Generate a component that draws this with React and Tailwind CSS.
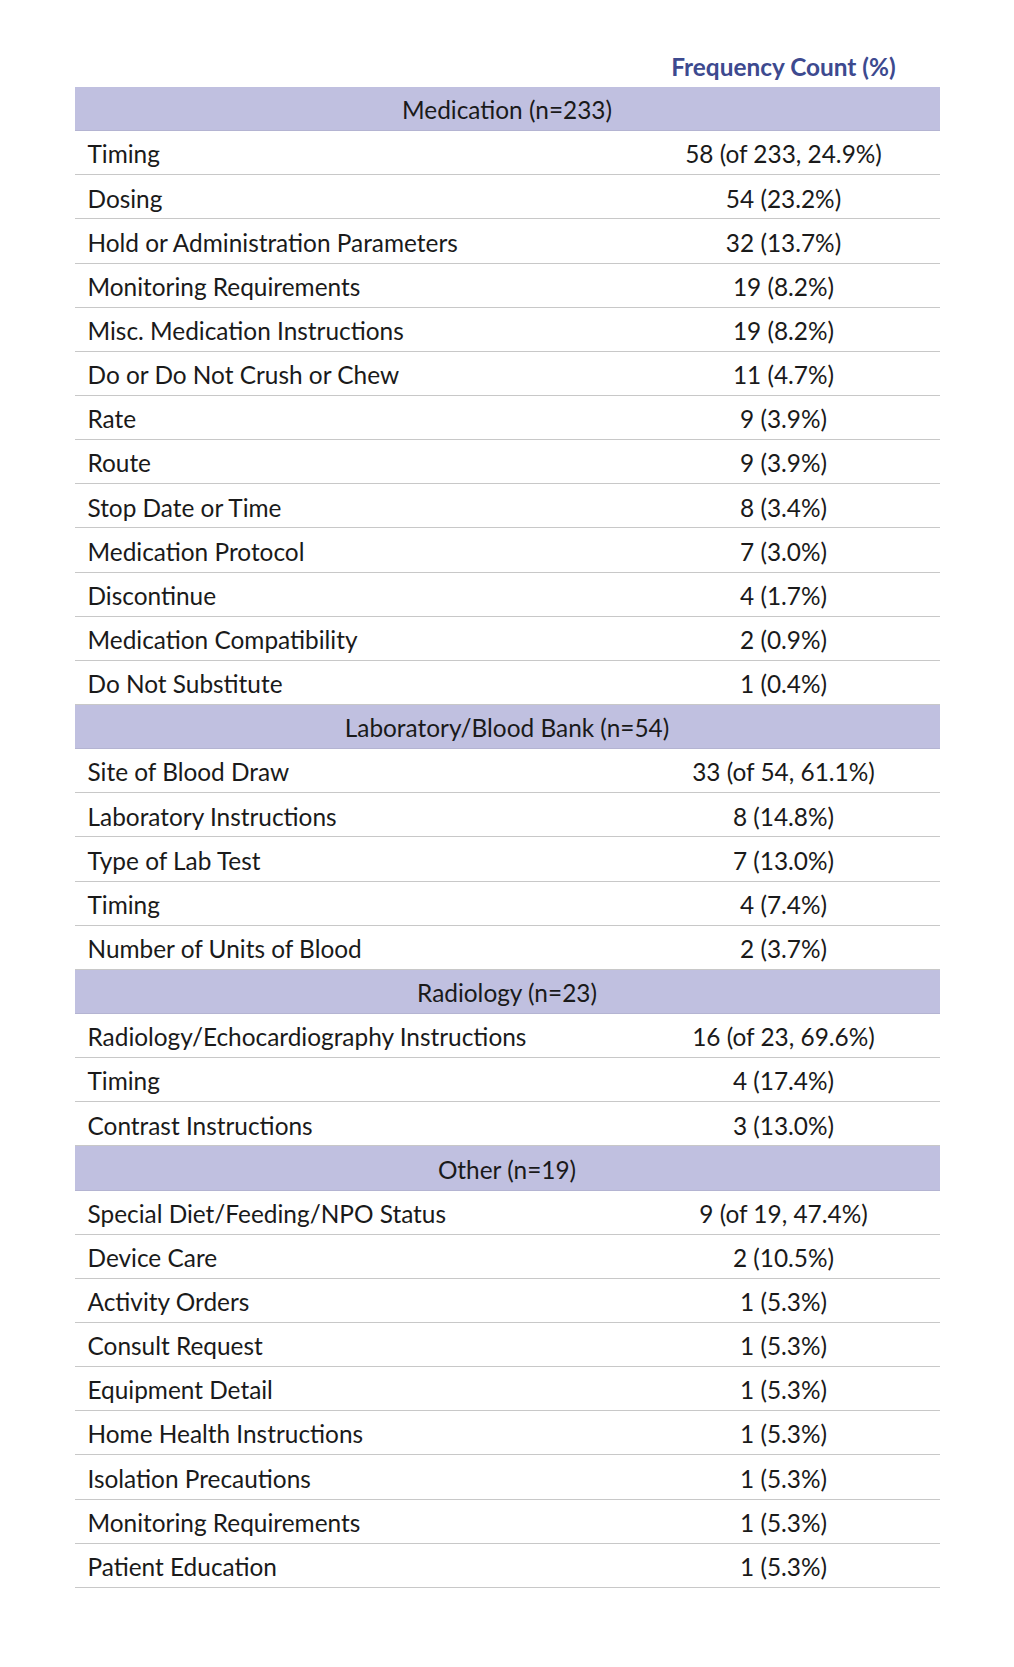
const SECTIONS = [
  {
    title: "Medication (n=233)",
    rows: [
      ["Timing", "58 (of 233, 24.9%)"],
      ["Dosing", "54 (23.2%)"],
      ["Hold or Administration Parameters", "32 (13.7%)"],
      ["Monitoring Requirements", "19 (8.2%)"],
      ["Misc. Medication Instructions", "19 (8.2%)"],
      ["Do or Do Not Crush or Chew", "11 (4.7%)"],
      ["Rate", "9 (3.9%)"],
      ["Route", "9 (3.9%)"],
      ["Stop Date or Time", "8 (3.4%)"],
      ["Medication Protocol", "7 (3.0%)"],
      ["Discontinue", "4 (1.7%)"],
      ["Medication Compatibility", "2 (0.9%)"],
      ["Do Not Substitute", "1 (0.4%)"],
    ],
  },
  {
    title: "Laboratory/Blood Bank (n=54)",
    rows: [
      ["Site of Blood Draw", "33 (of 54, 61.1%)"],
      ["Laboratory Instructions", "8 (14.8%)"],
      ["Type of Lab Test", "7 (13.0%)"],
      ["Timing", "4 (7.4%)"],
      ["Number of Units of Blood", "2 (3.7%)"],
    ],
  },
  {
    title: "Radiology (n=23)",
    rows: [
      ["Radiology/Echocardiography Instructions", "16 (of 23, 69.6%)"],
      ["Timing", "4 (17.4%)"],
      ["Contrast Instructions", "3 (13.0%)"],
    ],
  },
  {
    title: "Other (n=19)",
    rows: [
      ["Special Diet/Feeding/NPO Status", "9 (of 19, 47.4%)"],
      ["Device Care", "2 (10.5%)"],
      ["Activity Orders", "1 (5.3%)"],
      ["Consult Request", "1 (5.3%)"],
      ["Equipment Detail", "1 (5.3%)"],
      ["Home Health Instructions", "1 (5.3%)"],
      ["Isolation Precautions", "1 (5.3%)"],
      ["Monitoring Requirements", "1 (5.3%)"],
      ["Patient Education", "1 (5.3%)"],
    ],
  },
];

export default function App() {
  return (
    <div className="min-h-[1667px] bg-white pt-[45px] text-[#1a1a1a]" style={{ fontFamily: "Lato, 'Open Sans', sans-serif" }}>
      <div className="mx-auto w-[865px] text-[24.4px]">
        <div className="flex h-[42px] items-center pt-[2px]">
          <div className="flex-1" />
          <div className="w-[312px] text-center font-bold text-[#3d4a8f]">Frequency Count (%)</div>
        </div>
        {SECTIONS.map((s) => (
          <div key={s.title}>
            <div className="flex h-[44.15px] items-center justify-center border-b border-[#b4b4d2] bg-[#c0c0e0] pt-[4px]">
              {s.title}
            </div>
            {s.rows.map(([label, val], i) => (
              <div key={i} className="flex h-[44.15px] items-center border-b-[1.5px] border-[#c8c8c8] pt-[4px]">
                <div className="flex-1 pl-[13px]">{label}</div>
                <div className="w-[312px] text-center">{val}</div>
              </div>
            ))}
          </div>
        ))}
      </div>
    </div>
  );
}
